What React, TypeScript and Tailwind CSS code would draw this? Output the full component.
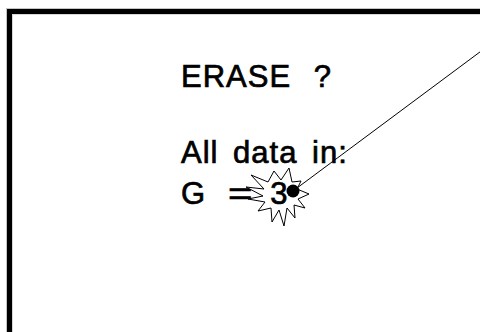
import React from "react";

const starPts: [number, number][] = [
  [251, 175], [268, 182], [274, 171], [281, 180], [289, 168], [292, 182],
  [301, 181], [297, 189], [309, 194], [298, 199], [305, 208], [294, 205],
  [295, 218], [287, 208], [284, 226], [279, 210], [272, 222], [271, 208],
  [258, 211], [265, 202], [248, 199], [263, 196], [246, 187], [264, 189],
];

export default function App() {
  const font = { fontFamily: '"Liberation Sans", Arial, sans-serif' };
  return (
    <div className="relative w-[480px] h-[332px] bg-white overflow-hidden" style={font}>
      <div className="ml-[6px] mt-[8px] h-[324px] border-l border-t border-[#c4c4c4]">
        <div className="h-full border-l-[5px] border-t-[5px] border-black">
          <div className="h-full border-l border-t border-[#d8d8d8] pl-[168px] pt-[44px] text-black text-[31px] leading-[36px] tracking-[1px] [-webkit-text-stroke:0.7px_black]">
            <div className="[word-spacing:13px]">ERASE ?</div>
            <div className="mt-[40px] [word-spacing:5px]">All data in:</div>
            <div className="mt-[5px] flex items-baseline">
              <span>G</span>
              <span className="ml-[22px] inline-block scale-x-[1.35] origin-left">=</span>
              <span className="relative z-20 ml-[23px]">3</span>
            </div>
          </div>
        </div>
      </div>
      <svg className="absolute left-0 top-0 z-10 pointer-events-none" width="480" height="332">
        <polygon
          points={starPts.map((p) => p.join(",")).join(" ")}
          fill="white"
          stroke="black"
          strokeWidth="1"
          strokeLinejoin="miter"
        />
      </svg>
      <svg className="absolute left-0 top-0 z-30 pointer-events-none" width="480" height="332">
        <line x1="293" y1="191" x2="492" y2="43" stroke="black" strokeWidth="1" />
        <circle cx="293" cy="191" r="6.5" fill="black" />
      </svg>
    </div>
  );
}
